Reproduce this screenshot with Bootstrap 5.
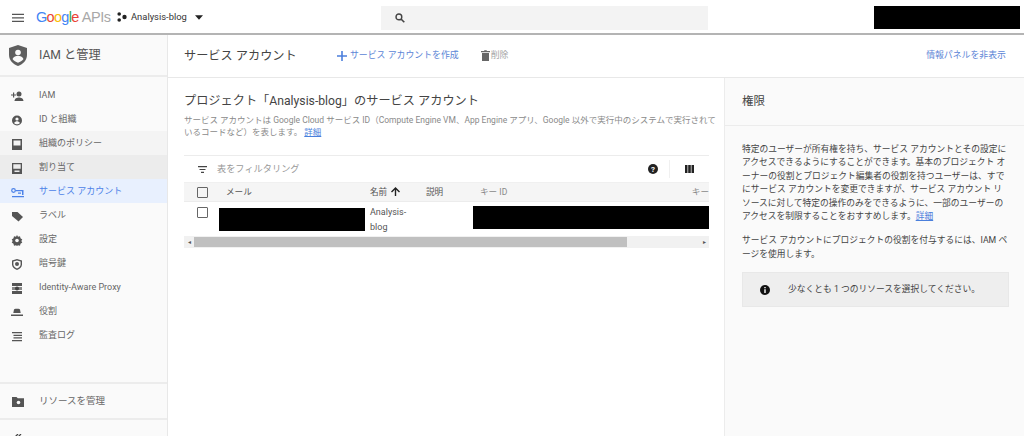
<!doctype html>
<html lang="ja"><head><meta charset="utf-8"><title>サービス アカウント</title>
<link href="https://cdn.jsdelivr.net/npm/bootstrap@5.3.0/dist/css/bootstrap.min.css" rel="stylesheet">
<style>
html,body{height:436px;overflow:hidden}
body{font-family:Roboto,"Noto Sans CJK JP",sans-serif;font-size:9px;color:#333;background:#fff}
svg{display:block;flex:none}
.topbar{height:35px;padding-top:2px;border-bottom:2px solid #b4b4b4;background:#fff}
.burger{margin-left:12px;margin-right:12px}
.glogo{font-family:"Liberation Sans",sans-serif;font-size:14.5px;letter-spacing:-.7px;width:81px;white-space:nowrap}
.gb{color:#4285f4}.gr{color:#ea4335}.gy{color:#fbbc05}.gg{color:#34a853}.apis{color:#a8a8a8;margin-left:3px;letter-spacing:-.4px}
.proj{font-size:9.4px;color:#333;width:264px}
.searchbox{width:327px;height:24px;background:#f3f3f3;padding-left:14px}
.redact{background:#000}
.acct{width:146px;height:23px;margin-left:auto;margin-right:4px}
.mainrow{height:401px}
.sidenav{width:168px;background:#fafafa;border-right:1px solid #e8e8e8;color:#666}
.sidehead{height:42px;border-bottom:2px solid #ececec;font-size:12.2px;padding-left:9px;gap:12px;color:#555}
.navlist{padding-top:6px}
.navrow{height:24px;font-size:9px;padding:2px 0 0 11px;gap:15px}
.navrow.hov1{background:#f4f4f4}
.navrow.hov2{background:#ececec}
.navrow.act{background:#e8f0fe;color:#4c82e8}
.sidefoot{border-top:2px solid #ececec;height:36px;font-size:9.5px;padding:1px 0 0 12px;gap:15px}
.sidefoot2{border-top:2px solid #ececec;height:18px;padding:14px 0 0 13px}
.content{width:856px}
.pagehead{height:43px;border-bottom:1px solid #e8e8e8;padding-left:16px;padding-right:18px}
.pagetitle{font-size:12.2px;width:153px;color:#444}
.actblue{color:#5c85d6;font-size:8.9px;gap:3px}
.actgrey{color:#a5a5a5;font-size:8.9px;gap:1px;margin-left:22px}
.hidepanel{margin-left:auto;color:#5c85d6;font-size:8.9px}
.panelwrap{height:358px}
.mainpane{width:557px;padding:15px 16px 0 16px;border-right:1px solid #ececec}
.h-proj{font-size:12.2px;font-weight:400;line-height:16px;color:#444;margin:0 0 6px}
.desc{font-size:8.5px;line-height:11.5px;color:#8a8a8a;height:32px;white-space:nowrap}
.lnk{color:#4a7fdc;text-decoration:underline}
.tablebox{width:525px;border-top:1px solid #ececec}
.filterrow{height:26px;padding-left:14px;color:#999;font-size:9.2px;gap:10px}
.filtericons{margin-left:auto;padding-right:15px}
.sep{width:1px;height:18px;background:#f0f0f0;margin:0 15px 0 11px}
.thead-row{height:20px;background:#f5f5f5;border-top:1px solid #f0f0f0;border-bottom:1px solid #ececec;font-size:8.6px;color:#555}
.tbody-row{height:34px}
.c1{width:14px;margin-left:13px}
.c1b{padding-top:5px}
.c2{width:144px;margin-left:15px}
.c3{width:56px}
.c4{width:47px}
.c5{flex:1;color:#8a8a8a;white-space:nowrap;overflow:hidden;padding-left:7px}
.cb{width:11px;height:11px;border:1.5px solid #666;border-radius:1px}
.hr1{height:23px;width:146px;margin:6px 0 0 -7px}
.namecell{font-size:9px;line-height:14.5px;color:#555;width:56px;padding:3px 8px 0 0}
.hr2{height:23px;width:236px;margin:4px 0 0 0;flex:none}
.sbar{height:12px;background:#f1f1f1}
.sthumb{width:433px;height:10px;background:#c0c0c0}
.sarrow{width:10px;font-size:6px;color:#555;text-align:center;line-height:12px}
.infopane{width:299px;background:#fafafa;color:#444;font-size:8.75px;line-height:13.4px}
.infohead{height:48px;border-bottom:1px solid #ececec;font-size:11.5px;padding-left:17px;color:#444}
.infotext{padding:17px 0 0 17px;white-space:nowrap}
.infotext p{margin:0 0 11px}
.notice{height:35px;background:#eee;border:1px solid #e8e8e8;padding-left:17px;gap:18px;margin-top:8px;width:267px}
</style></head>
<body>
<div class="topbar d-flex align-items-center">
 <svg class="burger" width="12" height="10" viewBox="0 0 13 10"><path d="M0 .5h13v1.300H0zM0 4.300h13v1.300H0zM0 8.100h13v1.300H0z" fill="#555"/></svg>
 <div class="glogo"><span class="gb">G</span><span class="gr">o</span><span class="gy">o</span><span class="gb">g</span><span class="gg">l</span><span class="gr">e</span><span class="apis">APIs</span></div>
 <div class="proj d-flex align-items-center gap-1">
  <svg width="10" height="10" viewBox="0 0 10 10"><circle cx="2.200" cy="2" r="1.800" fill="#222"/><circle cx="2.200" cy="8" r="1.800" fill="#222"/><circle cx="7.500" cy="5" r="2.200" fill="#222"/></svg>
  <span>Analysis-blog</span>
  <svg class="ms-1" width="8" height="5" viewBox="0 0 9 5"><path d="M0 0h9L4.500 5z" fill="#222"/></svg>
 </div>
 <div class="searchbox d-flex align-items-center">
  <svg width="10" height="10" viewBox="0 0 10 10"><circle cx="3.900" cy="3.900" r="2.900" fill="none" stroke="#444" stroke-width="1.400"/><path d="M6 6l3.300 3.300" stroke="#444" stroke-width="1.600"/></svg>
 </div>
 <div class="acct redact"></div>
</div>
<div class="mainrow d-flex">
 <nav class="sidenav d-flex flex-column flex-shrink-0">
  <div class="sidehead d-flex align-items-center">
   <svg width="18" height="21" viewBox="0 0 18 21"><path d="M9 0l9 3v7c0 5-3.800 9-9 11-5.200-2-9-6-9-11V3z" fill="#5f5f5f"/><circle cx="9" cy="7.500" r="2.800" fill="#fafafa"/><path d="M3.500 14c1-2.500 3.500-3.300 5.500-3.300s4.500.8 5.500 3.300c-1.300 1.800-3.300 3-5.500 3.800-2.200-.8-4.200-2-5.500-3.800z" fill="#fafafa"/></svg>
   <span>IAM と管理</span>
  </div>
  <div class="navlist flex-grow-1">
   <div class="navrow d-flex align-items-center"><svg width="13" height="11" viewBox="0 0 13 11"><circle cx="8" cy="3" r="2.500" fill="#555"/><path d="M3.500 10c0-2.500 2.500-3.500 4.500-3.500s4.500 1 4.500 3.500zM0 3.400h2V1.500h1.200v1.900h2v1.200h-2v2H2v-2H0z" fill="#555"/></svg><span>IAM</span></div>
   <div class="navrow d-flex align-items-center"><svg width="13" height="11" viewBox="0 0 13 11"><circle cx="6" cy="5.500" r="5" fill="#555"/><circle cx="6" cy="4" r="1.600" fill="#fafafa"/><path d="M3 8c.8-1.200 2-1.700 3-1.700S8.200 6.800 9 8c-.8.8-1.800 1.300-3 1.300S3.800 8.800 3 8z" fill="#fafafa"/></svg><span>ID と組織</span></div>
   <div class="navrow hov1 d-flex align-items-center"><svg width="13" height="11" viewBox="0 0 13 11"><path d="M1 0h10v11H1z" fill="#555"/><path d="M2.500 1.500h7v5h-7z" fill="#f4f4f4"/></svg><span>組織のポリシー</span></div>
   <div class="navrow hov2 d-flex align-items-center"><svg width="13" height="11" viewBox="0 0 13 11"><path d="M1 0h10v11H1z" fill="#555"/><path d="M2.300 1.300h7.400v4.500H2.300zM3.500 7.500h5v1.500h-5z" fill="#ececec"/></svg><span>割り当て</span></div>
   <div class="navrow act d-flex align-items-center"><svg width="13" height="11" viewBox="0 0 13 11"><circle cx="2.500" cy="3.500" r="1.800" fill="none" stroke="#4c82e8" stroke-width="1.200"/><path d="M4.500 3h8v5H11V4.200H4.500zM1 9h12v1.200H1zM7 5.500h3v1.200H7z" fill="#4c82e8"/></svg><span>サービス アカウント</span></div>
   <div class="navrow d-flex align-items-center"><svg width="13" height="11" viewBox="0 0 13 11"><path d="M1 1h5.500L12 6l-4.500 4.500L1 5z" fill="#555"/></svg><span>ラベル</span></div>
   <div class="navrow d-flex align-items-center"><svg width="13" height="11" viewBox="0 0 13 11"><path d="M6 0l1 1.800 2-.5.500 2 1.800 1.200-1 1.500 1 1.500L9.500 8.700l-.5 2-2-.5L6 11l-1-.8-2 .5-.5-2L.7 7.500l1-1.500-1-1.500L2.500 3.300l.5-2 2 .5z" fill="#555"/><circle cx="6" cy="5.500" r="1.800" fill="#fafafa"/></svg><span>設定</span></div>
   <div class="navrow d-flex align-items-center"><svg width="13" height="11" viewBox="0 0 13 11"><path d="M6 0l5 1.500v4c0 2.500-2 4.500-5 5.500-3-1-5-3-5-5.500v-4z" fill="#555"/><path d="M6 1.600l3.600 1v3c0 1.700-1.500 3.200-3.600 4-2.100-.8-3.600-2.300-3.600-4v-3z" fill="#fafafa"/><circle cx="6" cy="5" r="2" fill="#555"/></svg><span>暗号鍵</span></div>
   <div class="navrow d-flex align-items-center"><svg width="13" height="11" viewBox="0 0 13 11"><path d="M1 0h10v3H1zM1 8h10v3H1z" fill="#555"/><path d="M1 4h10v3H1z" fill="#888"/><circle cx="6" cy="5.500" r="2" fill="#444"/></svg><span>Identity-Aware Proxy</span></div>
   <div class="navrow d-flex align-items-center"><svg width="13" height="11" viewBox="0 0 13 11"><path d="M3 2.500c.5-1 1.500-1 3-.7 1.500-.3 2.500-.3 3 .7l.7 3.500H2.300zM0 7.500h12V9H0z" fill="#555"/></svg><span>役割</span></div>
   <div class="navrow d-flex align-items-center"><svg width="13" height="11" viewBox="0 0 13 11"><path d="M1 1h10v1.300H1zM2.500 3.700h8.500V5H2.500zM2.500 6.300h8.500v1.300H2.500zM1 9h10v1.300H1z" fill="#555"/></svg><span>監査ログ</span></div>
  </div>
  <div class="sidefoot d-flex align-items-center"><svg width="12" height="11" viewBox="0 0 12 11"><path d="M0 1h4.500l1.300 1.300H12V11H0z" fill="#555"/><circle cx="6.500" cy="6.500" r="1.800" fill="#fafafa"/></svg><span>リソースを管理</span></div>
  <div class="sidefoot2"><svg width="9" height="9" viewBox="0 0 9 9"><path d="M5 0L1 4l4 4M8 0L4 4l4 4" fill="none" stroke="#444" stroke-width="1.300"/></svg></div>
 </nav>
 <main class="content d-flex flex-column">
  <div class="pagehead d-flex align-items-center">
   <div class="pagetitle">サービス アカウント</div>
   <div class="actblue d-flex align-items-center"><svg width="10" height="10" viewBox="0 0 10 10"><path d="M4.200 0h1.600v4.200H10v1.600H5.800V10H4.200V5.800H0V4.200h4.200z" fill="#4c7fdc"/></svg><span>サービス アカウントを作成</span></div>
   <div class="actgrey d-flex align-items-center"><svg width="9" height="11" viewBox="0 0 9 11"><path d="M0 1h3l.5-.7h2L6 1h3v1.300H0zM1 3h7v8H1z" fill="#666"/></svg><span>削除</span></div>
   <div class="hidepanel">情報パネルを非表示</div>
  </div>
  <div class="panelwrap d-flex">
   <section class="mainpane">
    <h2 class="h-proj">プロジェクト「Analysis-blog」のサービス アカウント</h2>
    <div class="desc">サービス アカウントは Google Cloud サービス ID（Compute Engine VM、App Engine アプリ、Google 以外で実行中のシステムで実行されて<br>いるコードなど）を表します。 <span class="lnk">詳細</span></div>
    <div class="mt-2 tablebox">
     <div class="filterrow d-flex align-items-center">
      <svg width="9" height="7" viewBox="0 0 9 7"><path d="M0 0h9v1.200H0zM1.500 2.900h6v1.200h-6zM3 5.800h3V7H3z" fill="#444"/></svg>
      <span>表をフィルタリング</span>
      <div class="filtericons d-flex align-items-center">
       <svg width="10" height="10" viewBox="0 0 10 10"><circle cx="5" cy="5" r="5" fill="#222"/><text x="5" y="7.800" font-size="8" font-weight="700" text-anchor="middle" fill="#fff" font-family="Roboto">?</text></svg>
       <div class="sep"></div>
       <svg width="9" height="8" viewBox="0 0 9 8"><path d="M0 0h2.500v8H0zM3.200 0h2.600v8H3.200zM6.500 0H9v8H6.500z" fill="#222"/></svg>
      </div>
     </div>
     <div class="thead-row d-flex align-items-center">
      <div class="c1"><div class="cb"></div></div>
      <div class="c2">メール</div>
      <div class="c3 d-flex align-items-center gap-1">名前 <svg width="9" height="9" viewBox="0 0 9 9"><path d="M3.800 9V2.800L1 5.500 0 4.500 4.500 0 9 4.500 8 5.500 5.200 2.800V9z" fill="#222"/></svg></div>
      <div class="c4">説明</div>
      <div class="c5 d-flex justify-content-between"><span>キー ID</span><span>キー</span></div>
     </div>
     <div class="tbody-row d-flex align-items-start">
      <div class="c1 c1b"><div class="cb"></div></div>
      <div class="c2"><div class="hr1 redact"></div></div>
      <div class="namecell">Analysis-blog</div>
      <div class="c4"></div>
      <div class="hr2 redact"></div>
     </div>
     <div class="sbar d-flex align-items-center">
      <div class="sarrow">◂</div><div class="sthumb"></div><div class="flex-grow-1"></div><div class="sarrow">▸</div>
     </div>
    </div>
   </section>
   <aside class="infopane">
    <div class="infohead d-flex align-items-center">権限</div>
    <div class="infotext">
     <p>特定のユーザーが所有権を持ち、サービス アカウントとその設定に<br>アクセスできるようにすることができます。基本のプロジェクト オ<br>ーナーの役割とプロジェクト編集者の役割を持つユーザーは、すで<br>にサービス アカウントを変更できますが、サービス アカウント リ<br>ソースに対して特定の操作のみをできるように、一部のユーザーの<br>アクセスを制限することをおすすめします。<span class="lnk">詳細</span></p>
     <p>サービス アカウントにプロジェクトの役割を付与するには、IAM ペ<br>ージを使用します。</p>
     <div class="notice d-flex align-items-center"><svg width="10" height="10" viewBox="0 0 10 10"><circle cx="5" cy="5" r="5" fill="#111"/><path d="M4.300 4.200h1.400V8H4.300zM4.300 2h1.400v1.300H4.300z" fill="#fff"/></svg><span>少なくとも 1 つのリソースを選択してください。</span></div>
    </div>
   </aside>
  </div>
 </main>
</div>
<script src="https://cdn.jsdelivr.net/npm/bootstrap@5.3.0/dist/js/bootstrap.bundle.min.js"></script>
</body></html>
